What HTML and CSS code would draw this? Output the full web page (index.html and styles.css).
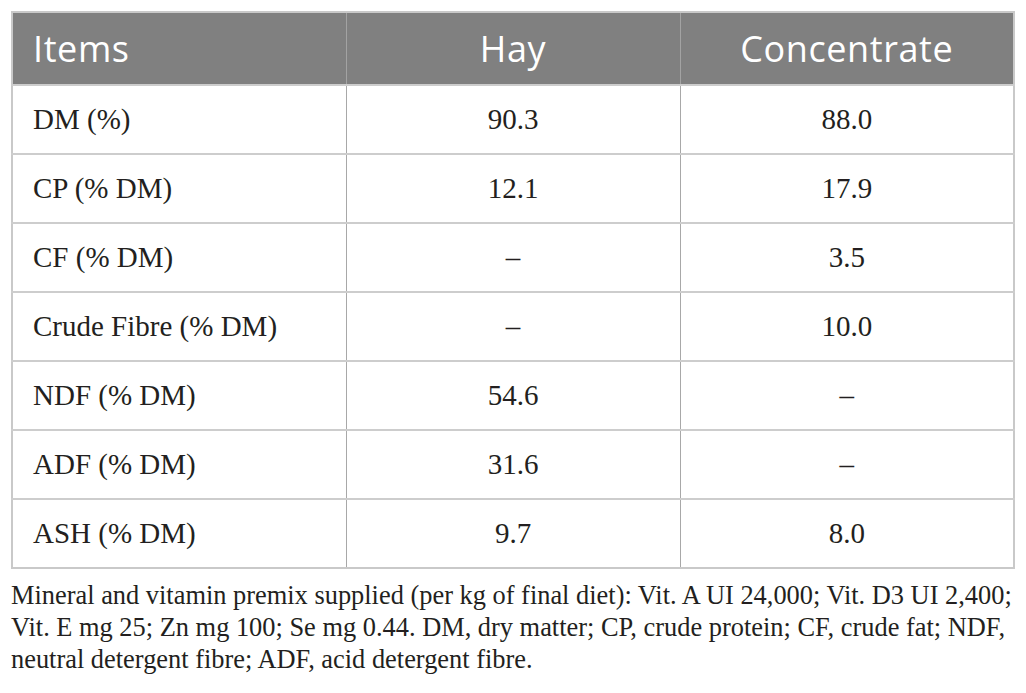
FILE: index.html
```html
<!DOCTYPE html>
<html>
<head>
<meta charset="utf-8">
<link rel="stylesheet" href="styles.css">
</head>
<body>
<div class="wrap">
<table class="data">
  <thead>
    <tr><th class="left">Items</th><th>Hay</th><th>Concentrate</th></tr>
  </thead>
  <tbody>
    <tr><td class="left">DM (%)</td><td>90.3</td><td>88.0</td></tr>
    <tr><td class="left">CP (% DM)</td><td>12.1</td><td>17.9</td></tr>
    <tr><td class="left">CF (% DM)</td><td>–</td><td>3.5</td></tr>
    <tr><td class="left">Crude Fibre (% DM)</td><td>–</td><td>10.0</td></tr>
    <tr><td class="left">NDF (% DM)</td><td>54.6</td><td>–</td></tr>
    <tr><td class="left">ADF (% DM)</td><td>31.6</td><td>–</td></tr>
    <tr><td class="left">ASH (% DM)</td><td>9.7</td><td>8.0</td></tr>
  </tbody>
</table>
<p class="note">Mineral and vitamin premix supplied (per kg of final diet): Vit. A UI 24,000; Vit. D3 UI 2,400; Vit. E mg 25; Zn mg 100; Se mg 0.44. DM, dry matter; CP, crude protein; CF, crude fat; NDF, neutral detergent fibre; ADF, acid detergent fibre.</p>
</div>
</body>
</html>
```
FILE: styles.css
```css
html, body {
  margin: 0;
  padding: 0;
  background: #ffffff;
}
.wrap {
  padding: 11px 11px 0 11px;
}
.data {
  width: 1004px;
  border-collapse: collapse;
  table-layout: fixed;
  border: 2px solid #c9c9c9;
}
.data th {
  background: #808080;
  color: #ffffff;
  font-family: "Open Sans", "Noto Sans", sans-serif;
  font-weight: 400;
  font-size: 36px;
  letter-spacing: 0.6px;
  height: 73px;
  padding: 0 20px;
  text-align: center;
  border-left: 1px solid #a3a3a3;
  box-sizing: border-box;
}
.data td {
  font-family: "Liberation Serif", "Times New Roman", serif;
  font-size: 29px;
  color: #231f20;
  height: 69px;
  padding: 0 20px;
  text-align: center;
  border-top: 2px solid #cdcdcd;
  border-left: 1px solid #a8a8a8;
  box-sizing: border-box;
}
.data .left {
  text-align: left;
}
.data th:first-child, .data td:first-child {
  border-left: none;
}
.note {
  margin: 10px 0 0 0;
  font-family: "Liberation Serif", "Times New Roman", serif;
  font-size: 26.4px;
  line-height: 32px;
  color: #231f20;
  width: 1004px;
}
```
